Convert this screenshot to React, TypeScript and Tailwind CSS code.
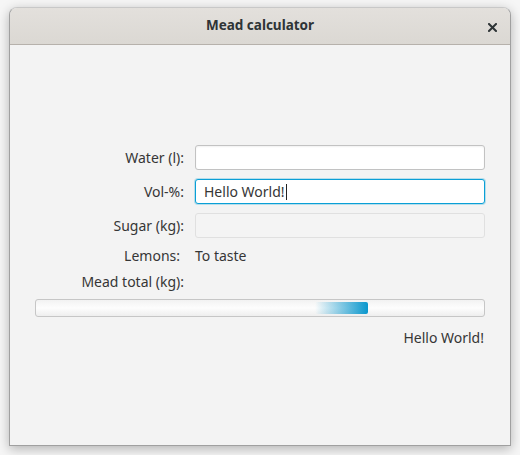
import React from "react";

export default function App() {
  const font = { fontFamily: '"Noto Sans", "Open Sans", sans-serif' };
  return (
    <div className="w-[520px] h-[455px] bg-[#f6f6f6] pl-[9px] pt-[7px]" style={font}>
      <div className="w-[502px] h-[439px] flex flex-col rounded-t-[8px] border border-[#a0a0a0] border-t-[#c8c8c8] bg-[#f3f3f3] shadow-[0_3px_12px_rgba(0,0,0,0.28)] overflow-hidden">
        <div className="relative h-[37px] shrink-0 flex items-center justify-center bg-gradient-to-b from-[#e3e0dc] to-[#dbd8d3] border-b border-[#b6b1ab]">
          <span className="text-[13.5px] font-bold text-[#2e3436] leading-none">Mead calculator</span>
          <svg className="absolute left-[478px] top-[15px]" width="9" height="9" viewBox="0 0 9 9">
            <path d="M1 1 L8 8 M8 1 L1 8" stroke="#2e3436" strokeWidth="2" strokeLinecap="square" />
          </svg>
        </div>
        <div className="flex flex-col pl-[25px] pt-[100px] text-[14px] text-[#363636]">
          <div className="grid grid-cols-[149px_290px] gap-x-[11px] gap-y-[9px] items-center">
            <div className="text-right leading-none">Water (l):</div>
            <div className="h-[25px] rounded-[3px] border border-[#c2c2c2] bg-white shadow-[inset_0_1px_2px_rgba(0,0,0,0.06)]" />
            <div className="text-right leading-none">Vol-%:</div>
            <div className="h-[25px] rounded-[3px] border border-[#0a9fd6] bg-white shadow-[0_0_0_1px_rgba(3,158,211,0.25)] flex items-center pl-[8px]">
              <span className="leading-none">Hello World!</span>
              <span className="w-px h-[16px] bg-[#222] ml-[1px]" />
            </div>
            <div className="text-right leading-none">Sugar (kg):</div>
            <div className="h-[25px] rounded-[3px] border border-[#e0e0e0] bg-[#f4f4f4]" />
            <div className="text-right h-[17px] flex items-center justify-end pr-[4px]">Lemons:</div>
            <div className="h-[17px] flex items-center">To taste</div>
            <div className="text-right h-[17px] flex items-center justify-end">Mead total (kg):</div>
            <div className="h-[17px]" />
          </div>
          <div className="mt-[9px] w-[450px] h-[18px] rounded-[3px] border border-[#c6c6c6] bg-gradient-to-b from-[#f2f2f2] via-[#fdfdfd] to-[#eeeeee] relative">
            <div className="absolute left-[279px] top-[2px] w-[53px] h-[12px] rounded-[2px] bg-gradient-to-r from-[rgba(11,154,208,0)] to-[#0a97cd]" />
          </div>
          <div className="w-[450px] h-[22px] mt-[9px] flex items-center justify-end pr-[1px]">Hello World!</div>
        </div>
      </div>
    </div>
  );
}
